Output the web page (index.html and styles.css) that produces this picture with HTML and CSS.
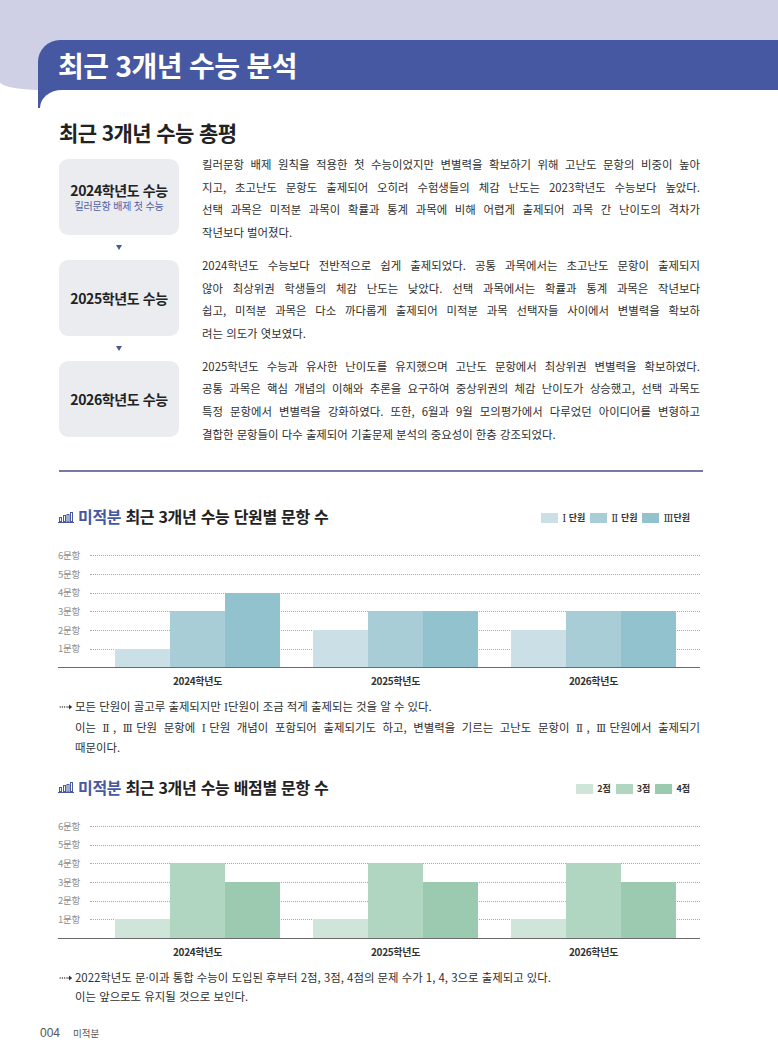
FILE: index.html
```html
<!DOCTYPE html>
<html lang="ko">
<head>
<meta charset="utf-8">
<title>최근 3개년 수능 분석</title>
<link rel="stylesheet" href="styles.css">
</head>
<body>
<header class="hero">
  <div class="title-bar"><h1>최근 3개년 수능 분석</h1></div>
</header>
<div class="tail"><div class="tail-inner"></div></div>

<main class="content">
  <h2 class="section-title">최근 3개년 수능 총평</h2>

  <section class="summary">
    <div class="steps">
      <div class="step">
        <div class="step-year">2024학년도 수능</div>
        <div class="step-sub">킬러문항 배제 첫 수능</div>
      </div>
      <div class="step-arrow"><span class="tri"></span></div>
      <div class="step">
        <div class="step-year">2025학년도 수능</div>
      </div>
      <div class="step-arrow"><span class="tri"></span></div>
      <div class="step">
        <div class="step-year">2026학년도 수능</div>
      </div>
    </div>
    <div class="desc">
      <p>
        <span class="line">킬러문항 배제 원칙을 적용한 첫 수능이었지만 변별력을 확보하기 위해 고난도 문항의 비중이 높아</span>
        <span class="line">지고, 초고난도 문항도 출제되어 오히려 수험생들의 체감 난도는 2023학년도 수능보다 높았다.</span>
        <span class="line">선택 과목은 미적분 과목이 확률과 통계 과목에 비해 어렵게 출제되어 과목 간 난이도의 격차가</span>
        <span class="line end">작년보다 벌어졌다.</span>
      </p>
      <p>
        <span class="line">2024학년도 수능보다 전반적으로 쉽게 출제되었다. 공통 과목에서는 초고난도 문항이 출제되지</span>
        <span class="line">않아 최상위권 학생들의 체감 난도는 낮았다. 선택 과목에서는 확률과 통계 과목은 작년보다</span>
        <span class="line">쉽고, 미적분 과목은 다소 까다롭게 출제되어 미적분 과목 선택자들 사이에서 변별력을 확보하</span>
        <span class="line end">려는 의도가 엿보였다.</span>
      </p>
      <p>
        <span class="line">2025학년도 수능과 유사한 난이도를 유지했으며 고난도 문항에서 최상위권 변별력을 확보하였다.</span>
        <span class="line">공통 과목은 핵심 개념의 이해와 추론을 요구하여 중상위권의 체감 난이도가 상승했고, 선택 과목도</span>
        <span class="line">특정 문항에서 변별력을 강화하였다. 또한, 6월과 9월 모의평가에서 다루었던 아이디어를 변형하고</span>
        <span class="line end">결합한 문항들이 다수 출제되어 기출문제 분석의 중요성이 한층 강조되었다.</span>
      </p>
    </div>
  </section>

  <div class="rule"></div>

  <!-- Chart 1 -->
  <div class="chart-head first">
    <h3 class="chart-title">
      <svg class="chart-icon" width="16" height="13" viewBox="0 0 16 13" aria-hidden="true">
        <rect x="1.5" y="7.5" width="2" height="4.5" fill="none" stroke="#4658a1" stroke-width="1"/>
        <rect x="5.5" y="5.5" width="2" height="6.5" fill="none" stroke="#4658a1" stroke-width="1"/>
        <rect x="9" y="4.5" width="2" height="7.5" fill="none" stroke="#4658a1" stroke-width="1"/>
        <rect x="12.5" y="2.5" width="2" height="9.5" fill="none" stroke="#4658a1" stroke-width="1"/>
        <line x1="0" y1="12.5" x2="16" y2="12.5" stroke="#4658a1" stroke-width="1"/>
      </svg>
      <span class="accent">미적분</span>&nbsp;최근 3개년 수능 단원별 문항 수
    </h3>
    <div class="legend">
      <span class="lg-item"><i class="sw c1"></i><span class="rn">Ⅰ</span>&nbsp;단원</span>
      <span class="lg-item"><i class="sw c2"></i><span class="rn">Ⅱ</span>&nbsp;단원</span>
      <span class="lg-item"><i class="sw c3"></i><span class="rn">Ⅲ</span>단원</span>
    </div>
  </div>

  <div class="chart">
    <div class="yaxis">
      <span>6문항</span><span>5문항</span><span>4문항</span><span>3문항</span><span>2문항</span><span>1문항</span>
    </div>
    <div class="plot">
      <div class="gridlines"><div></div><div></div><div></div><div></div><div></div><div></div></div>
      <div class="bars">
        <div class="group">
          <div class="bar c1" style="height:18.667px"></div>
          <div class="bar c2" style="height:56px"></div>
          <div class="bar c3" style="height:74.667px"></div>
        </div>
        <div class="group">
          <div class="bar c1" style="height:37.333px"></div>
          <div class="bar c2" style="height:56px"></div>
          <div class="bar c3" style="height:56px"></div>
        </div>
        <div class="group">
          <div class="bar c1" style="height:37.333px"></div>
          <div class="bar c2" style="height:56px"></div>
          <div class="bar c3" style="height:56px"></div>
        </div>
      </div>
    </div>
  </div>
  <div class="xlabels"><span>2024학년도</span><span>2025학년도</span><span>2026학년도</span></div>

  <div class="note">
    <span class="note-mark">
      <svg width="14" height="8" viewBox="0 0 14 8" aria-hidden="true">
        <circle cx="1.2" cy="4" r="0.7" fill="#333"/>
        <circle cx="3.4" cy="4" r="0.7" fill="#333"/>
        <circle cx="5.6" cy="4" r="0.7" fill="#333"/>
        <line x1="7.2" y1="4" x2="10.5" y2="4" stroke="#333" stroke-width="0.9"/>
        <polygon points="10,1.6 13.2,4 10,6.4" fill="#333"/>
      </svg>
    </span>
    <div class="note-text">
      <span class="line end">모든 단원이 골고루 출제되지만 <span class="rn">Ⅰ</span>단원이 조금 적게 출제되는 것을 알 수 있다.</span>
      <span class="line">이는 <span class="rn">Ⅱ</span>, <span class="rn">Ⅲ</span>단원 문항에 <span class="rn">Ⅰ</span>단원 개념이 포함되어 출제되기도 하고, 변별력을 기르는 고난도 문항이 <span class="rn">Ⅱ</span>, <span class="rn">Ⅲ</span>단원에서 출제되기</span>
      <span class="line end">때문이다.</span>
    </div>
  </div>

  <!-- Chart 2 -->
  <div class="chart-head second">
    <h3 class="chart-title">
      <svg class="chart-icon" width="16" height="13" viewBox="0 0 16 13" aria-hidden="true">
        <rect x="1.5" y="7.5" width="2" height="4.5" fill="none" stroke="#4658a1" stroke-width="1"/>
        <rect x="5.5" y="5.5" width="2" height="6.5" fill="none" stroke="#4658a1" stroke-width="1"/>
        <rect x="9" y="4.5" width="2" height="7.5" fill="none" stroke="#4658a1" stroke-width="1"/>
        <rect x="12.5" y="2.5" width="2" height="9.5" fill="none" stroke="#4658a1" stroke-width="1"/>
        <line x1="0" y1="12.5" x2="16" y2="12.5" stroke="#4658a1" stroke-width="1"/>
      </svg>
      <span class="accent">미적분</span>&nbsp;최근 3개년 수능 배점별 문항 수
    </h3>
    <div class="legend">
      <span class="lg-item"><i class="sw g1"></i>2점</span>
      <span class="lg-item"><i class="sw g2"></i>3점</span>
      <span class="lg-item"><i class="sw g3"></i>4점</span>
    </div>
  </div>

  <div class="chart">
    <div class="yaxis">
      <span>6문항</span><span>5문항</span><span>4문항</span><span>3문항</span><span>2문항</span><span>1문항</span>
    </div>
    <div class="plot">
      <div class="gridlines"><div></div><div></div><div></div><div></div><div></div><div></div></div>
      <div class="bars">
        <div class="group">
          <div class="bar g1" style="height:18.667px"></div>
          <div class="bar g2" style="height:74.667px"></div>
          <div class="bar g3" style="height:56px"></div>
        </div>
        <div class="group">
          <div class="bar g1" style="height:18.667px"></div>
          <div class="bar g2" style="height:74.667px"></div>
          <div class="bar g3" style="height:56px"></div>
        </div>
        <div class="group">
          <div class="bar g1" style="height:18.667px"></div>
          <div class="bar g2" style="height:74.667px"></div>
          <div class="bar g3" style="height:56px"></div>
        </div>
      </div>
    </div>
  </div>
  <div class="xlabels"><span>2024학년도</span><span>2025학년도</span><span>2026학년도</span></div>

  <div class="note">
    <span class="note-mark">
      <svg width="14" height="8" viewBox="0 0 14 8" aria-hidden="true">
        <circle cx="1.2" cy="4" r="0.7" fill="#333"/>
        <circle cx="3.4" cy="4" r="0.7" fill="#333"/>
        <circle cx="5.6" cy="4" r="0.7" fill="#333"/>
        <line x1="7.2" y1="4" x2="10.5" y2="4" stroke="#333" stroke-width="0.9"/>
        <polygon points="10,1.6 13.2,4 10,6.4" fill="#333"/>
      </svg>
    </span>
    <div class="note-text">
      <span class="line end">2022학년도 문·이과 통합 수능이 도입된 후부터 2점, 3점, 4점의 문제 수가 1, 4, 3으로 출제되고 있다.</span>
      <span class="line end">이는 앞으로도 유지될 것으로 보인다.</span>
    </div>
  </div>
</main>

<footer class="footer"><span class="page-no">004</span><span class="page-sub">미적분</span></footer>
</body>
</html>
```

FILE: styles.css
```css
* { box-sizing: border-box; }

body {
  margin: 0;
  width: 778px;
  background: #fff;
  color: #222;
  font-family: "Noto Sans CJK KR", "Noto Sans", sans-serif;
}

/* ---------- header ---------- */
.hero {
  height: 90px;
  padding: 40px 0 0 38px;
  background: #cfd0e6;
  border-bottom-left-radius: 45px 8px;
}
.title-bar {
  height: 50px;
  padding-left: 20px;
  display: flex;
  align-items: center;
  background: #4658a1;
  border-top-left-radius: 22px;
}
.title-bar h1 {
  margin: 0;
  color: #fff;
  font-size: 28px;
  font-weight: 700;
  letter-spacing: -0.6px;
  line-height: 1;
}
.tail {
  margin-left: 38px;
  height: 18px;
  background: #4658a1;
}
.tail-inner {
  margin-left: 2px;
  height: 18px;
  background: #fff;
  border-top-left-radius: 22px 18px;
}

/* ---------- content ---------- */
.content {
  padding-left: 59px;
  width: 703px;
}
.section-title {
  margin: 12px 0 0;
  font-size: 21px;
  line-height: 24px;
  font-weight: 700;
  letter-spacing: -0.6px;
  color: #222;
}

.summary {
  display: grid;
  grid-template-columns: 120px 498px;
  column-gap: 23px;
  margin-top: 9px;
}
.steps {
  display: flex;
  flex-direction: column;
  padding-top: 6px;
}
.step {
  height: 76px;
  background: #ebecf0;
  border-radius: 9px;
  display: flex;
  flex-direction: column;
  align-items: center;
  justify-content: center;
}
.step-year {
  font-size: 14px;
  font-weight: 700;
  line-height: 18px;
  letter-spacing: -0.4px;
  color: #222;
}
.step-sub {
  font-size: 10px;
  line-height: 14px;
  letter-spacing: -0.2px;
  color: #4f5ea6;
}
.step-arrow {
  height: 25px;
  display: flex;
  align-items: center;
  justify-content: center;
}
.tri {
  width: 0;
  height: 0;
  border-left: 3px solid transparent;
  border-right: 3px solid transparent;
  border-top: 5px solid #4a5898;
}

.desc p {
  margin: 0 0 10px;
  font-size: 11.4px;
  line-height: 22.7px;
  color: #2f2f2f;
}
.desc p:last-child { margin-bottom: 0; }

.line {
  display: block;
  text-align: justify;
  text-align-last: justify;
}
.line.end { text-align-last: left; }

.rn {
  font-family: "DejaVu Serif", "Liberation Serif", serif;
  font-size: 0.9em;
}

.rule {
  margin-top: 25px;
  width: 644px;
  height: 2px;
  background: #737c9f;
}

/* ---------- charts ---------- */
.chart-head {
  width: 641px;
  height: 20px;
  display: flex;
  align-items: center;
  justify-content: space-between;
}
.chart-head.first { margin-top: 34px; }
.chart-head.second { margin-top: 19px; }
.chart-title {
  margin: 0 0 0 -1px;
  display: flex;
  align-items: center;
  font-size: 16px;
  line-height: 20px;
  font-weight: 700;
  letter-spacing: -0.3px;
  color: #222;
}
.chart-icon { margin-right: 4px; flex: none; }
.accent { color: #4658a1; }

.legend {
  display: flex;
  align-items: center;
  gap: 5px;
  margin-right: 10px;
  margin-top: 4px;
}
.lg-item {
  display: flex;
  align-items: center;
  font-size: 9px;
  font-weight: 700;
  color: #333;
  line-height: 12px;
}
.lg-item .rn {
  font-weight: 400;
  font-size: 1.15em;
}
.sw {
  display: inline-block;
  width: 17px;
  height: 10px;
  margin-right: 4px;
}

.c1 { background: #cbe0e6; }
.c2 { background: #a8cdd7; }
.c3 { background: #93c2cf; }
.g1 { background: #d0e5d9; }
.g2 { background: #b0d5c0; }
.g3 { background: #9ccab1; }

.chart {
  display: grid;
  grid-template-columns: 32px 1fr;
  width: 642px;
  margin: 29px 0 0 -1px;
  border-bottom: 1.5px solid #6b6b6b;
}
.yaxis {
  display: flex;
  flex-direction: column;
  margin-top: -9.333px;
}
.yaxis span {
  height: 18.667px;
  line-height: 18.667px;
  font-size: 9.5px;
  color: #8c8c8c;
  letter-spacing: -0.2px;
}
.plot {
  display: grid;
  height: 112px;
}
.plot > * { grid-area: 1 / 1; }
.gridlines div {
  height: 18.667px;
  border-top: 1px dotted #a8a8a8;
}
.bars {
  display: flex;
  align-items: flex-end;
  gap: 33px;
  padding-left: 25px;
}
.group {
  display: flex;
  align-items: flex-end;
}
.bar { width: 55px; }

.xlabels {
  display: flex;
  gap: 33px;
  padding-left: 56px;
  margin-top: 6px;
}
.xlabels span {
  width: 165px;
  text-align: center;
  font-size: 10px;
  line-height: 14px;
  font-weight: 700;
  color: #333;
  letter-spacing: -0.3px;
}

.note {
  display: flex;
  margin-top: 9px;
}
.note-mark {
  flex: none;
  width: 16px;
  height: 19.5px;
  display: flex;
  align-items: center;
}
.note-text {
  width: 625px;
  font-size: 11.4px;
  line-height: 19.5px;
  color: #2f2f2f;
}

/* ---------- footer ---------- */
.footer {
  margin-top: 19px;
  padding-left: 40px;
  display: flex;
  align-items: baseline;
  height: 16px;
}
.page-no {
  font-family: "Liberation Sans", sans-serif;
  font-size: 12px;
  color: #555;
}
.page-sub {
  margin-left: 13px;
  font-size: 9.5px;
  color: #555;
}
```
